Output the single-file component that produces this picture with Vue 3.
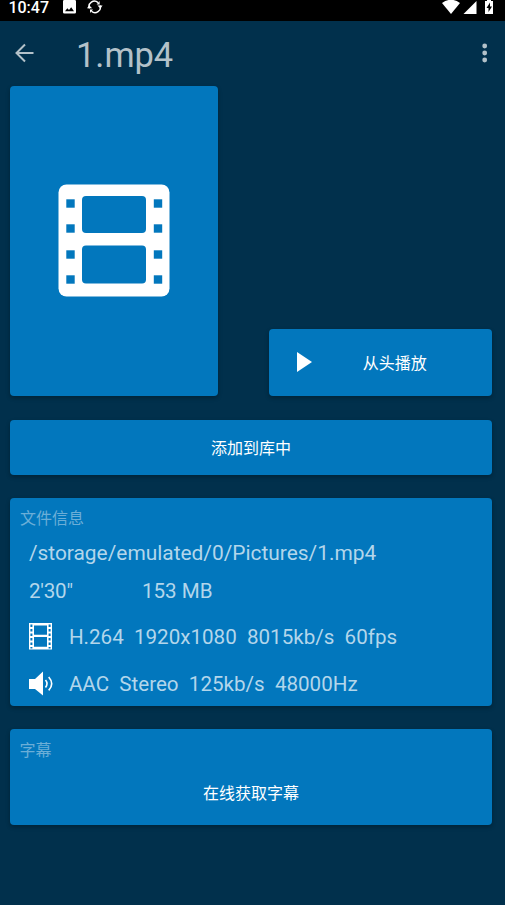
<script setup>
const videoInfo = ['H.264', '1920x1080', '8015kb/s', '60fps'].join('\u00a0 ')
const audioInfo = ['AAC', 'Stereo', '125kb/s', '48000Hz'].join('\u00a0 ')
const perforations = [19.5, 44.5, 70.5, 95.5]
</script>

<template>
  <div class="screen">
    <div class="status">
      <span class="clock">10:47</span>
      <svg class="photo" width="13" height="14" viewBox="0 0 13 14">
        <path fill="#fff" fill-rule="evenodd" d="M1.3 0h10.4Q13 0 13 1.3v11q0 1.3-1.3 1.3H1.3Q0 13.600 0 12.300v-11Q0 0 1.300 0zM2 11.300h9L8.200 7.300 6 10 4.300 8.200z" />
      </svg>
      <svg class="sync" width="16" height="14" viewBox="0 0 16 14">
        <g fill="none" stroke="#fff" stroke-width="1.500">
          <path d="M2.500 8.500A5.300 5.300 0 0 1 11 2.600" />
          <path d="M13 5.500A5.300 5.300 0 0 1 4.500 11.300" />
        </g>
        <path fill="#fff" d="M0 8.200 2.200 5.200 5.200 8.200zM10.500 5.500 13.300 8.600 15.600 5.500zM9.600 4.400 12.700 4.600 12.500 1zM6 9.500 2.900 9.400 3.200 13z" />
      </svg>
      <svg class="signals" width="54" height="15" viewBox="0 0 54 15">
        <path fill="#fff" d="M0 3Q9 -3.500 18 3L9 14z" />
        <path fill="#fff" d="M34.500 1v13H21.500z" />
        <path fill="#fff" fill-rule="evenodd" d="M43 1h2V0h4v1h2v13h-8zM48 2.500 44.500 8h2v4L50 6.500h-2z" />
      </svg>
    </div>

    <header class="bar">
      <svg class="back" width="20" height="20" viewBox="0 0 20 20">
        <path fill="none" stroke="#b3c1c9" stroke-width="2" d="M19.500 10H2.500M11 1.500 2.500 10l8.500 8.500" />
      </svg>
      <h1>1.mp4</h1>
      <svg class="more" width="6" height="20" viewBox="0 0 6 20" fill="#b3c1c9">
        <circle cx="2.700" cy="3" r="2.400" /><circle cx="2.700" cy="10" r="2.400" /><circle cx="2.700" cy="17" r="2.400" />
      </svg>
    </header>

    <main>
      <section class="top">
        <div class="card poster">
          <svg width="112" height="114" viewBox="0 0 112 114">
            <rect x="0.500" y="0.500" width="111" height="112" rx="8" fill="#fff" />
            <g fill="#0277bd">
              <rect x="24" y="12" width="64" height="37" rx="4" />
              <rect x="24" y="61.500" width="64" height="38" rx="4" />
              <template v-for="y in perforations" :key="y">
                <rect x="8.300" :y="y - 4.200" width="8.400" height="8.400" />
                <rect x="95.800" :y="y - 4.200" width="8.400" height="8.400" />
              </template>
            </g>
          </svg>
        </div>
        <button class="card play">
          <svg width="15" height="20" viewBox="0 0 15 20"><path fill="#fff" d="M0 0 15 10 0 20z" /></svg>
          <span>从头播放</span>
        </button>
      </section>

      <button class="card add">添加到库中</button>

      <section class="card info">
        <h2>文件信息</h2>
        <p class="path">/storage/emulated/0/Pictures/1.mp4</p>
        <p class="meta"><span class="duration">2'30"</span><span>153 MB</span></p>
        <p class="track video">
          <svg width="24" height="27" viewBox="0 0 24 27">
            <path fill="#fff" fill-rule="evenodd" d="M0 0h23v26.500H0zM5 2.500v9.300h13V2.500zM5 14v9.800h13V14z" />
            <path stroke="#0277bd" stroke-width="2" stroke-dasharray="2.400 2.100" d="M2.400 1.600v24M20.600 1.600v24" />
          </svg>
          <span>{{ videoInfo }}</span>
        </p>
        <p class="track">
          <svg width="24" height="26" viewBox="0 0 24 26">
            <path fill="#fff" d="M0 8h6l8-7.500v24L6 18H0z" />
            <path fill="none" stroke="#fff" stroke-width="1.600" d="M16.500 9q3 3.700 0 7.400M19.700 6q6 6.700 0 13.400" />
          </svg>
          <span>{{ audioInfo }}</span>
        </p>
      </section>

      <section class="card subtitles">
        <h2>字幕</h2>
        <button>在线获取字幕</button>
      </section>
    </main>
  </div>
</template>

<style>
body { margin: 0; background: #01304c; }
</style>

<style scoped>
.screen {
  box-sizing: border-box;
  height: 905px;
  overflow: hidden;
  background: #01304c;
  color: #fff;
  font-family: Roboto, "Noto Sans CJK SC", sans-serif;
}
.status {
  display: flex;
  align-items: flex-start;
  height: 21px;
  padding: 0 9.500px 0 8.400px;
  background: #000;
}
.clock { width: 54.600px; font-size: 16px; font-weight: 500; line-height: 16px; }
.sync { margin-left: 11.500px; }
.signals { margin-left: auto; }
.bar {
  display: flex;
  align-items: center;
  height: 64px;
  padding: 0 17px 0 14px;
}
h1 {
  margin: 3px 0 0 42px;
  color: #b3c1c9;
  font-size: 34.400px;
  font-weight: 400;
  line-height: 40px;
}
.more { margin-left: auto; }
main { padding: 0.600px 13.400px 0 10.400px; }
button {
  padding: 0;
  border: 0;
  background: none;
  color: #fff;
  font: inherit;
  font-size: 16px;
}
.card {
  box-sizing: border-box;
  border-radius: 4px;
  background: #0277bd;
  box-shadow: 0 2px 4px rgba(0, 0, 0, 0.28);
}
.top { display: flex; align-items: flex-end; justify-content: space-between; height: 310.800px; }
.poster {
  display: flex;
  align-items: center;
  justify-content: center;
  width: 207.200px;
  height: 310.800px;
}
.play { display: flex; align-items: center; width: 222.200px; height: 67.600px; padding: 0 0 1px 27.400px; }
.play span { margin: -1px 0 0 51px; }
.add { display: block; width: 100%; height: 55px; margin-top: 23.200px; padding-bottom: 1px; }
.info { height: 208px; margin-top: 23.300px; padding: 9px 18.500px 0; }
h2 {
  margin: 0 0 0 -9px;
  color: #6baed7;
  font-size: 16px;
  font-weight: 400;
  line-height: 24px;
}
p { margin: 0; color: #b3d6eb; font-size: 20.900px; line-height: 24px; white-space: pre; }
.path { margin-top: 10px; }
.meta { display: flex; margin-top: 14px; font-size: 20.600px; }
.duration { width: 113px; letter-spacing: -0.200px; }
.track { display: flex; align-items: center; height: 27px; margin-top: 20px; font-size: 20.600px; }
.video { margin-top: 20.500px; }
.video span { padding-top: 1px; }
.track span { margin-left: 16px; }
.subtitles { height: 95.500px; margin-top: 23.400px; padding: 9.600px 18px 0; }
.subtitles button { display: block; width: 100%; margin-top: 19.300px; line-height: 24px; }
</style>
